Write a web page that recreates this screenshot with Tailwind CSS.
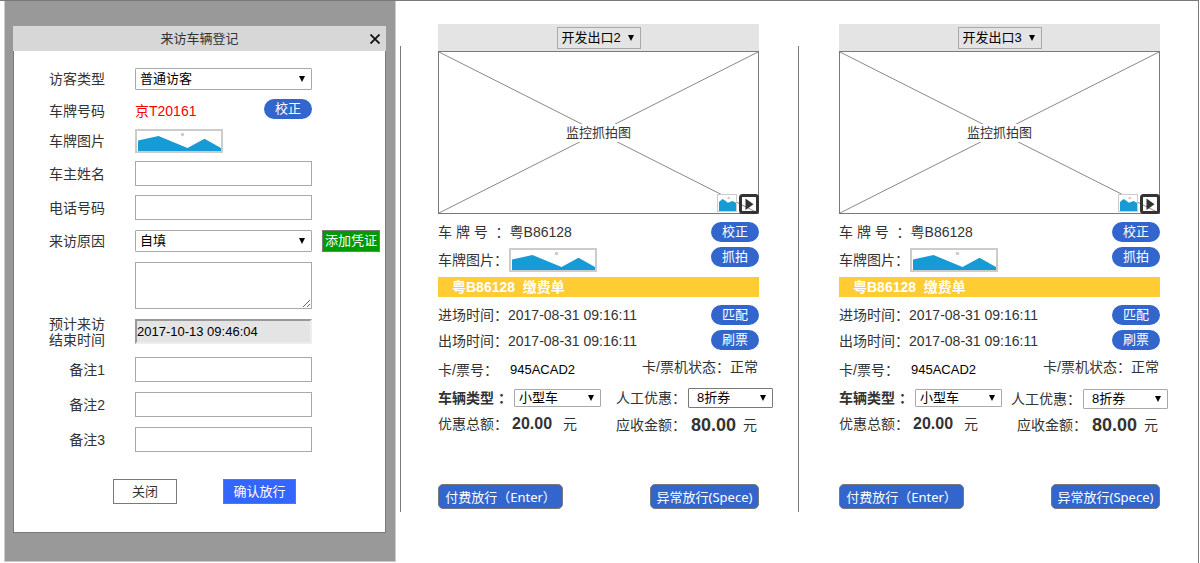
<!DOCTYPE html>
<html lang="zh-CN">
<head>
<meta charset="utf-8">
<meta name="viewport" content="width=device-width, initial-scale=1">
<title>来访车辆登记</title>
<script src="https://cdn.jsdelivr.net/npm/@tailwindcss/browser@4"></script>
</head>
<body class="bg-white font-['Liberation_Sans','Noto_Sans_CJK_SC',sans-serif] text-sm leading-5 text-[#333]">

<!-- Shared drawings -->
<svg class="hidden" aria-hidden="true">
  <symbol id="arrow" viewBox="0 0 6 6"><path d="M0 0h6L3 6z"/></symbol>
  <symbol id="plate" viewBox="0 0 88 24">
    <rect x="1" y="1" width="86" height="22" fill="#fff" stroke="#ccc" stroke-width="2"/>
    <circle cx="47.500" cy="5.500" r="1.800" fill="#ccc"/>
    <path d="M3 11.500 23.500 7 52.500 19 69.500 9.800 86 19V22H3z" fill="#169bd5"/>
  </symbol>
  <symbol id="thumb" viewBox="0 0 20 18">
    <rect x=".5" y=".5" width="19" height="17" fill="#fff" stroke="#ccc"/>
    <circle cx="11.700" cy="4" r="1.300" fill="#ccc"/>
    <path d="M2 8 5.500 5 8 6.500 11 8.800 15.500 7 19 8.800V17H2z" fill="#169bd5"/>
  </symbol>
  <symbol id="play" viewBox="0 0 20 20">
    <rect x="1.500" y="1.500" width="17" height="17" rx="2" fill="none" stroke="#333" stroke-width="3"/>
    <path d="M6.500 4.500v11.500L14.500 10.200z" fill="#333"/>
  </symbol>
</svg>

<div class="mr-px flex min-h-[563px] items-start border-t border-r border-[#797979]">

  <aside class="ml-1 w-[392px] shrink-0 border-x border-b border-[#ccc] bg-[#999] pt-[25px] pr-[9px] pb-7 pl-2">
    <header class="relative flex h-[25px] items-center justify-center bg-[#d7d7d7]">
      <h1 class="text-[13px]">来访车辆登记</h1>
      <button type="button" aria-label="关闭窗口" class="absolute right-1.5 p-0">
        <svg class="size-[10px]" viewBox="0 0 10 10" fill="none" stroke="#111" stroke-width="1.800"><path d="M.5.5l9 9M9.500.5l-9 9"/></svg>
      </button>
    </header>

    <form class="border-x border-b border-[#797979] bg-white pt-[17px] pb-7 pl-[35px]">
      <div class="flex items-center gap-[30px]">
        <label for="type" class="w-14 text-right">访客类型</label>
        <div class="relative">
          <select id="type" class="block h-[22px] w-[177px] appearance-none rounded-[1px] border border-[#a9a9a9] bg-white px-1 text-[13px] text-black"><option>普通访客</option></select>
          <svg class="pointer-events-none absolute top-2 right-[7px] size-1.5"><use href="#arrow"/></svg>
        </div>
      </div>
      <div class="mt-[9px] flex h-6 items-center gap-[30px]">
        <span class="w-14 text-right">车牌号码</span>
        <div class="flex w-[177px] items-center justify-between self-stretch">
          <span class="text-[#f00]">京T20161</span>
          <button type="button" class="h-5 w-12 self-start rounded-full bg-[#36c] text-[13px] text-white">校正</button>
        </div>
      </div>
      <div class="mt-1.5 flex items-center gap-[30px]">
        <span class="w-14 text-right">车牌图片</span>
        <svg class="h-6 w-[88px]" role="img" aria-label="车牌图片"><use href="#plate"/></svg>
      </div>
      <div class="mt-2 flex items-center gap-[30px]">
        <label for="owner" class="w-14 text-right">车主姓名</label>
        <input id="owner" type="text" class="h-[25px] w-[177px] border border-[#a9a9a9] px-1 text-[13px]">
      </div>
      <div class="mt-[9px] flex items-center gap-[30px]">
        <label for="phone" class="w-14 text-right">电话号码</label>
        <input id="phone" type="text" class="h-[25px] w-[177px] border border-[#a9a9a9] px-1 text-[13px]">
      </div>
      <div class="mt-2.5 flex items-center gap-[30px]">
        <label for="reason" class="w-14 text-right">来访原因</label>
        <div class="flex gap-2.5">
          <div class="relative">
            <select id="reason" class="block h-[22px] w-[177px] appearance-none rounded-[1px] border border-[#a9a9a9] bg-white px-1 text-[13px] text-black"><option>自填</option></select>
            <svg class="pointer-events-none absolute top-2 right-[7px] size-1.5"><use href="#arrow"/></svg>
          </div>
          <button type="button" class="h-[22px] w-[58px] border border-[#797979] bg-[#090] text-[13px] whitespace-nowrap text-white">添加凭证</button>
        </div>
      </div>
      <textarea aria-label="来访原因说明" class="mt-2.5 ml-[86px] block h-[47px] w-[177px] border border-[#a9a9a9] px-1 text-[13px]"></textarea>
      <div class="mt-2.5 flex h-[25px] items-center gap-[30px]">
        <label for="end" class="w-14 text-right leading-4">预计来访结束时间</label>
        <input id="end" type="text" value="2017-10-13 09:46:04" class="h-[25px] w-[177px] border-2 border-t-[#999] border-r-[#eee] border-b-[#eee] border-l-[#999] bg-[#e4e4e4] text-[13px] text-black">
      </div>
      <div class="mt-[13px] flex items-center gap-[30px]">
        <label for="note1" class="w-14 text-right">备注1</label>
        <input id="note1" type="text" class="h-[25px] w-[177px] border border-[#a9a9a9] px-1 text-[13px]">
      </div>
      <div class="mt-2.5 flex items-center gap-[30px]">
        <label for="note2" class="w-14 text-right">备注2</label>
        <input id="note2" type="text" class="h-[25px] w-[177px] border border-[#a9a9a9] px-1 text-[13px]">
      </div>
      <div class="mt-2.5 flex items-center gap-[30px]">
        <label for="note3" class="w-14 text-right">备注3</label>
        <input id="note3" type="text" class="h-[25px] w-[177px] border border-[#a9a9a9] px-1 text-[13px]">
      </div>
      <div class="mt-[27px] ml-16 flex gap-[46px]">
        <button type="button" class="h-[25px] w-16 border border-[#797979] bg-white text-[13px]">关闭</button>
        <button type="submit" class="h-[25px] w-[73px] border border-[#797979] bg-[#36f] text-[13px] text-white">确认放行</button>
      </div>
    </form>
  </aside>

  <div class="mt-[45px] ml-1 h-[466px] w-px shrink-0 bg-[#797979]"></div>

  <section class="mt-[23px] mr-[39px] ml-[37px] flex-1">
    <div class="flex h-[27px] items-center justify-center bg-[#e4e4e4]">
      <div class="relative">
        <select aria-label="出口" class="block h-[22px] w-[84px] appearance-none border border-[#a9a9a9] bg-[#e4e4e4] px-1 text-[13px] text-black"><option>开发出口2</option></select>
        <svg class="pointer-events-none absolute top-2 right-[7px] size-1.5"><use href="#arrow"/></svg>
      </div>
    </div>
    <div class="relative flex h-[163px] items-center justify-center border border-[#797979]">
      <svg class="absolute inset-0 size-full" viewBox="0 0 319 161" preserveAspectRatio="none" stroke="#888"><path d="M0 0 319 161M319 0 0 161"/></svg>
      <span class="relative bg-white px-0.5 text-[13px] leading-[18px]">监控抓拍图</span>
      <div class="absolute -right-px -bottom-px flex gap-0.5">
        <svg class="h-[18px] w-5"><use href="#thumb"/></svg>
        <svg class="size-5"><use href="#play"/></svg>
      </div>
    </div>

    <div class="mt-2 flex justify-between">
      <div class="flex flex-col gap-1.5">
        <p class="h-5">车 牌 号 &nbsp;：粤B86128</p>
        <div class="flex h-6 items-center">
          <span class="w-[71px]">车牌图片：</span>
          <svg class="h-6 w-[88px]" role="img" aria-label="车牌图片"><use href="#plate"/></svg>
        </div>
      </div>
      <div class="flex flex-col gap-[5px]">
        <button type="button" class="h-5 w-12 rounded-full bg-[#36c] text-[13px] text-white">校正</button>
        <button type="button" class="h-5 w-12 rounded-full bg-[#36c] text-[13px] text-white">抓拍</button>
      </div>
    </div>

    <h2 class="mt-[5px] h-5 bg-[#fc3] pl-3.5 font-bold text-white">粤B86128 &nbsp;缴费单</h2>

    <div class="mt-2 flex justify-between">
      <div class="flex flex-col gap-1.5">
        <p class="h-5">进场时间：2017-08-31 09:16:11</p>
        <p class="h-5">出场时间：2017-08-31 09:16:11</p>
      </div>
      <div class="flex flex-col gap-[5px]">
        <button type="button" class="h-5 w-12 rounded-full bg-[#36c] text-[13px] text-white">匹配</button>
        <button type="button" class="h-5 w-12 rounded-full bg-[#36c] text-[13px] text-white">刷票</button>
      </div>
    </div>

    <div class="flex justify-between whitespace-nowrap">
      <div class="pt-[9px]">
        <p class="flex h-5"><span class="w-[72px]">卡/票号：</span><span class="text-[13px] text-black">945ACAD2</span></p>
        <div class="mt-[9px] flex h-[18px] items-center">
          <label for="car2" class="w-[76px] font-bold">车辆类型 ：</label>
          <div class="relative">
            <select id="car2" class="block h-[18px] w-[87px] appearance-none rounded-[1px] border border-[#a9a9a9] bg-white px-1 text-[13px] leading-4 text-black"><option>小型车</option></select>
            <svg class="pointer-events-none absolute top-1.5 right-[7px] size-1.5"><use href="#arrow"/></svg>
          </div>
        </div>
        <p class="mt-[7px] flex h-5 items-center"><span class="w-[74px]">优惠总额：</span><b class="text-base leading-5">20.00</b><span class="ml-[11px]">元</span></p>
      </div>
      <div class="flex flex-col items-end pt-1.5">
        <p class="mr-px h-5">卡/票机状态：正常</p>
        <div class="mt-[11px] -mr-3.5 flex h-5 items-center">
          <label for="off2" class="w-[72px]">人工优惠：</label>
          <div class="relative">
            <select id="off2" class="block h-5 w-[85px] appearance-none rounded-[1px] border border-[#797979] bg-white px-2 text-[13px] leading-4 text-black"><option>8折券</option></select>
            <svg class="pointer-events-none absolute top-[7px] right-[7px] size-1.5"><use href="#arrow"/></svg>
          </div>
        </div>
        <p class="mt-[7px] flex h-5 items-center"><span class="w-[75px]">应收金额：</span><b class="text-lg leading-5">80.00</b><span class="mr-0.5 ml-[7px]">元</span></p>
      </div>
    </div>

    <div class="mt-[49px] flex justify-between font-['Noto_Sans','Noto_Sans_CJK_SC',sans-serif]">
      <button type="button" class="h-[25px] w-[125px] rounded-[5px] border border-[#797979] bg-[#36c] text-[13px] whitespace-nowrap text-white">付费放行（Enter）</button>
      <button type="button" class="h-[25px] w-[109px] rounded-[5px] border border-[#797979] bg-[#36c] text-[13px] whitespace-nowrap text-white">异常放行(Spece)</button>
    </div>
  </section>

  <div class="mt-[45px] h-[466px] w-px shrink-0 bg-[#797979]"></div>

  <section class="mt-[23px] mr-[38px] ml-10 flex-1">
    <div class="flex h-[27px] items-center justify-center bg-[#e4e4e4]">
      <div class="relative">
        <select aria-label="出口" class="block h-[22px] w-[84px] appearance-none border border-[#a9a9a9] bg-[#e4e4e4] px-1 text-[13px] text-black"><option>开发出口3</option></select>
        <svg class="pointer-events-none absolute top-2 right-[7px] size-1.5"><use href="#arrow"/></svg>
      </div>
    </div>
    <div class="relative flex h-[163px] items-center justify-center border border-[#797979]">
      <svg class="absolute inset-0 size-full" viewBox="0 0 319 161" preserveAspectRatio="none" stroke="#888"><path d="M0 0 319 161M319 0 0 161"/></svg>
      <span class="relative bg-white px-0.5 text-[13px] leading-[18px]">监控抓拍图</span>
      <div class="absolute -right-px -bottom-px flex gap-0.5">
        <svg class="h-[18px] w-5"><use href="#thumb"/></svg>
        <svg class="size-5"><use href="#play"/></svg>
      </div>
    </div>

    <div class="mt-2 flex justify-between">
      <div class="flex flex-col gap-1.5">
        <p class="h-5">车 牌 号 &nbsp;：粤B86128</p>
        <div class="flex h-6 items-center">
          <span class="w-[71px]">车牌图片：</span>
          <svg class="h-6 w-[88px]" role="img" aria-label="车牌图片"><use href="#plate"/></svg>
        </div>
      </div>
      <div class="flex flex-col gap-[5px]">
        <button type="button" class="h-5 w-12 rounded-full bg-[#36c] text-[13px] text-white">校正</button>
        <button type="button" class="h-5 w-12 rounded-full bg-[#36c] text-[13px] text-white">抓拍</button>
      </div>
    </div>

    <h2 class="mt-[5px] h-5 bg-[#fc3] pl-3.5 font-bold text-white">粤B86128 &nbsp;缴费单</h2>

    <div class="mt-2 flex justify-between">
      <div class="flex flex-col gap-1.5">
        <p class="h-5">进场时间：2017-08-31 09:16:11</p>
        <p class="h-5">出场时间：2017-08-31 09:16:11</p>
      </div>
      <div class="flex flex-col gap-[5px]">
        <button type="button" class="h-5 w-12 rounded-full bg-[#36c] text-[13px] text-white">匹配</button>
        <button type="button" class="h-5 w-12 rounded-full bg-[#36c] text-[13px] text-white">刷票</button>
      </div>
    </div>

    <div class="flex justify-between whitespace-nowrap">
      <div class="pt-[9px]">
        <p class="flex h-5"><span class="w-[72px]">卡/票号：</span><span class="text-[13px] text-black">945ACAD2</span></p>
        <div class="mt-[9px] flex h-[18px] items-center">
          <label for="car3" class="w-[76px] font-bold">车辆类型 ：</label>
          <div class="relative">
            <select id="car3" class="block h-[18px] w-[87px] appearance-none rounded-[1px] border border-[#a9a9a9] bg-white px-1 text-[13px] leading-4 text-black"><option>小型车</option></select>
            <svg class="pointer-events-none absolute top-1.5 right-[7px] size-1.5"><use href="#arrow"/></svg>
          </div>
        </div>
        <p class="mt-[7px] flex h-5 items-center"><span class="w-[74px]">优惠总额：</span><b class="text-base leading-5">20.00</b><span class="ml-[11px]">元</span></p>
      </div>
      <div class="flex flex-col items-end pt-1.5">
        <p class="mr-px h-5">卡/票机状态：正常</p>
        <div class="mt-3 -mr-2 flex h-5 items-center">
          <label for="off3" class="w-[72px]">人工优惠：</label>
          <div class="relative">
            <select id="off3" class="block h-5 w-[85px] appearance-none rounded-[1px] border border-[#a9a9a9] bg-white px-2 text-[13px] leading-4 text-black"><option>8折券</option></select>
            <svg class="pointer-events-none absolute top-[7px] right-[7px] size-1.5"><use href="#arrow"/></svg>
          </div>
        </div>
        <p class="mt-1.5 flex h-5 items-center"><span class="w-[75px]">应收金额：</span><b class="text-lg leading-5">80.00</b><span class="mr-0.5 ml-[7px]">元</span></p>
      </div>
    </div>

    <div class="mt-[49px] flex justify-between font-['Noto_Sans','Noto_Sans_CJK_SC',sans-serif]">
      <button type="button" class="h-[25px] w-[125px] rounded-[5px] border border-[#797979] bg-[#36c] text-[13px] whitespace-nowrap text-white">付费放行（Enter）</button>
      <button type="button" class="h-[25px] w-[109px] rounded-[5px] border border-[#797979] bg-[#36c] text-[13px] whitespace-nowrap text-white">异常放行(Spece)</button>
    </div>
  </section>
</div>
</body>
</html>
